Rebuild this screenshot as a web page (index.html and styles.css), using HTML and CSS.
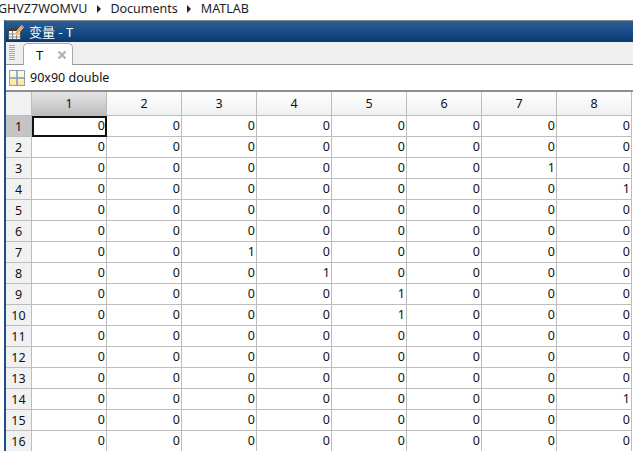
FILE: index.html
```html
<!DOCTYPE html>
<html lang="zh">
<head>
<meta charset="utf-8">
<title>变量 - T</title>
<link rel="stylesheet" href="styles.css">
</head>
<body>
<nav class="crumbs"><span>GHVZ7WOMVU</span><i class="arrow"></i><span>Documents</span><i class="arrow"></i><span>MATLAB</span></nav>
<main class="window">
  <header class="title">
    <svg class="title-icon" width="16" height="16" viewBox="0 0 16 16"><rect x="0.500" y="4.500" width="12" height="11" fill="#f7f7f7" stroke="#4a4a4a"/><rect x="0.500" y="4.500" width="12" height="2.500" fill="#3c3c3c"/><path d="M0.500 10h12M0.500 13h12M4.500 7v8M8.500 7v8" stroke="#8a8a8a"/><path d="M6.500 11.500l1-3 6-7 2 1.700-6 7z" fill="#f2a73c" stroke="#fff" stroke-width="0.600"/><path d="M12.500 2.700l1.200-1.400 2 1.700-1.200 1.400z" fill="#e58a8a"/></svg>
    <span>变量 - T</span>
  </header>
  <div class="tabs">
    <span class="grip"></span>
    <div class="tab"><span>T</span>
      <svg class="close" width="10" height="10" viewBox="0 0 10 10"><path d="M1.500 1.500l7 7M8.500 1.500l-7 7" stroke="#b4b4b4" stroke-width="2.400"/></svg>
    </div>
  </div>
  <div class="info">
    <svg class="grid-icon" width="16" height="16" viewBox="0 0 16 16"><defs><linearGradient id="pane" x1="0" y1="0" x2="0" y2="1"><stop offset="0" stop-color="#fffdf0"/><stop offset="1" stop-color="#fbe497"/></linearGradient></defs><rect x="0.500" y="0.500" width="15" height="15" fill="url(#pane)" stroke="#8c9fb4"/><path d="M0.500 8h15M8 0.500v15" stroke="#7f99b8" stroke-width="1.500"/></svg>
    <span>90x90 double</span>
  </div>
  <div class="sheet">
    <div class="row head"><div class="corner"></div><div class="ch sel">1</div><div class="ch">2</div><div class="ch">3</div><div class="ch">4</div><div class="ch">5</div><div class="ch">6</div><div class="ch">7</div><div class="ch">8</div></div>
    <div class="row"><div class="rh sel">1</div><div class="c cur">0</div><div class="c">0</div><div class="c">0</div><div class="c">0</div><div class="c">0</div><div class="c">0</div><div class="c">0</div><div class="c">0</div></div>
    <div class="row"><div class="rh">2</div><div class="c">0</div><div class="c">0</div><div class="c">0</div><div class="c">0</div><div class="c">0</div><div class="c">0</div><div class="c">0</div><div class="c">0</div></div>
    <div class="row"><div class="rh">3</div><div class="c">0</div><div class="c">0</div><div class="c">0</div><div class="c">0</div><div class="c">0</div><div class="c">0</div><div class="c">1</div><div class="c">0</div></div>
    <div class="row"><div class="rh">4</div><div class="c">0</div><div class="c">0</div><div class="c">0</div><div class="c">0</div><div class="c">0</div><div class="c">0</div><div class="c">0</div><div class="c">1</div></div>
    <div class="row"><div class="rh">5</div><div class="c">0</div><div class="c">0</div><div class="c">0</div><div class="c">0</div><div class="c">0</div><div class="c">0</div><div class="c">0</div><div class="c">0</div></div>
    <div class="row"><div class="rh">6</div><div class="c">0</div><div class="c">0</div><div class="c">0</div><div class="c">0</div><div class="c">0</div><div class="c">0</div><div class="c">0</div><div class="c">0</div></div>
    <div class="row"><div class="rh">7</div><div class="c">0</div><div class="c">0</div><div class="c">1</div><div class="c">0</div><div class="c">0</div><div class="c">0</div><div class="c">0</div><div class="c">0</div></div>
    <div class="row"><div class="rh">8</div><div class="c">0</div><div class="c">0</div><div class="c">0</div><div class="c">1</div><div class="c">0</div><div class="c">0</div><div class="c">0</div><div class="c">0</div></div>
    <div class="row"><div class="rh">9</div><div class="c">0</div><div class="c">0</div><div class="c">0</div><div class="c">0</div><div class="c">1</div><div class="c">0</div><div class="c">0</div><div class="c">0</div></div>
    <div class="row"><div class="rh">10</div><div class="c">0</div><div class="c">0</div><div class="c">0</div><div class="c">0</div><div class="c">1</div><div class="c">0</div><div class="c">0</div><div class="c">0</div></div>
    <div class="row"><div class="rh">11</div><div class="c">0</div><div class="c">0</div><div class="c">0</div><div class="c">0</div><div class="c">0</div><div class="c">0</div><div class="c">0</div><div class="c">0</div></div>
    <div class="row"><div class="rh">12</div><div class="c">0</div><div class="c">0</div><div class="c">0</div><div class="c">0</div><div class="c">0</div><div class="c">0</div><div class="c">0</div><div class="c">0</div></div>
    <div class="row"><div class="rh">13</div><div class="c">0</div><div class="c">0</div><div class="c">0</div><div class="c">0</div><div class="c">0</div><div class="c">0</div><div class="c">0</div><div class="c">0</div></div>
    <div class="row"><div class="rh">14</div><div class="c">0</div><div class="c">0</div><div class="c">0</div><div class="c">0</div><div class="c">0</div><div class="c">0</div><div class="c">0</div><div class="c">1</div></div>
    <div class="row"><div class="rh">15</div><div class="c">0</div><div class="c">0</div><div class="c">0</div><div class="c">0</div><div class="c">0</div><div class="c">0</div><div class="c">0</div><div class="c">0</div></div>
    <div class="row"><div class="rh">16</div><div class="c">0</div><div class="c">0</div><div class="c">0</div><div class="c">0</div><div class="c">0</div><div class="c">0</div><div class="c">0</div><div class="c">0</div></div>
  </div>
</main>
</body>
</html>
```
FILE: styles.css
```css
* { box-sizing: border-box; }
html, body { margin: 0; height: 461px; overflow: hidden; background: #fff; }
body { width: 633px; font-family: "Noto Sans", "Noto Sans CJK SC", sans-serif; font-size: 12.5px; color: #111; }

.crumbs { height: 18px; margin: 0 0 2px -2px; display: flex; align-items: center; gap: 9.5px; color: #1c1c1c; line-height: 18px; white-space: nowrap; }
.arrow { width: 0; height: 0; border-left: 4px solid #222; border-top: 4px solid transparent; border-bottom: 4px solid transparent; }

.window { margin-left: 4px; height: 431px; overflow: hidden; border-left: 2px solid #1f4f86; border-top: 1px solid #8a8a8a; }

.title { height: 21px; margin-left: -2px; padding-left: 4px; display: flex; align-items: center; gap: 5px; color: #fff; font-size: 13px; background: linear-gradient(#2a5f96, #063a74); }

.tabs { height: 23px; display: flex; align-items: flex-end; padding-left: 3px; background: #efefef; border-bottom: 1px solid #959595; }
.grip { width: 6px; height: 16px; margin: 0 8px 3px 0; background: repeating-linear-gradient(#aaa 0 1px, transparent 1px 2px); }
.tab { width: 50px; height: 22px; margin-bottom: -1px; display: flex; align-items: center; gap: 14px; padding-left: 12px; font-size: 13px; background: #fff; border: 1px solid #a8a8a8; border-bottom: 0; border-radius: 5px 5px 0 0; }

.info { height: 27px; display: flex; align-items: center; gap: 5px; padding-left: 3px; background: #fff; border-bottom: 2px solid #8f8f8f; }
.grid-icon { flex: none; }

.sheet { display: flex; flex-direction: column; }
.row { display: grid; grid-template-columns: 26px repeat(8, 75px); height: 21px; flex: none; }
.row.head { height: 24px; }

.corner, .ch, .rh { background: #f1f1f1; border-right: 1px solid #bdbdbd; border-bottom: 1px solid #bdbdbd; }
.ch { display: flex; align-items: center; justify-content: center; background: linear-gradient(#fff, #eff0f2); }
.ch.sel { background: linear-gradient(#e6e6e6, #bcbcbc); }
.rh { display: flex; align-items: center; justify-content: center; }
.rh.sel { background: #c4c4c4; }
.c { text-align: right; line-height: 20px; padding-right: 1px; border-right: 1px solid #bdbdbd; border-bottom: 1px solid #bdbdbd; background: #fff; }
.c.cur { outline: 2px solid #111; outline-offset: -2px; }
```
